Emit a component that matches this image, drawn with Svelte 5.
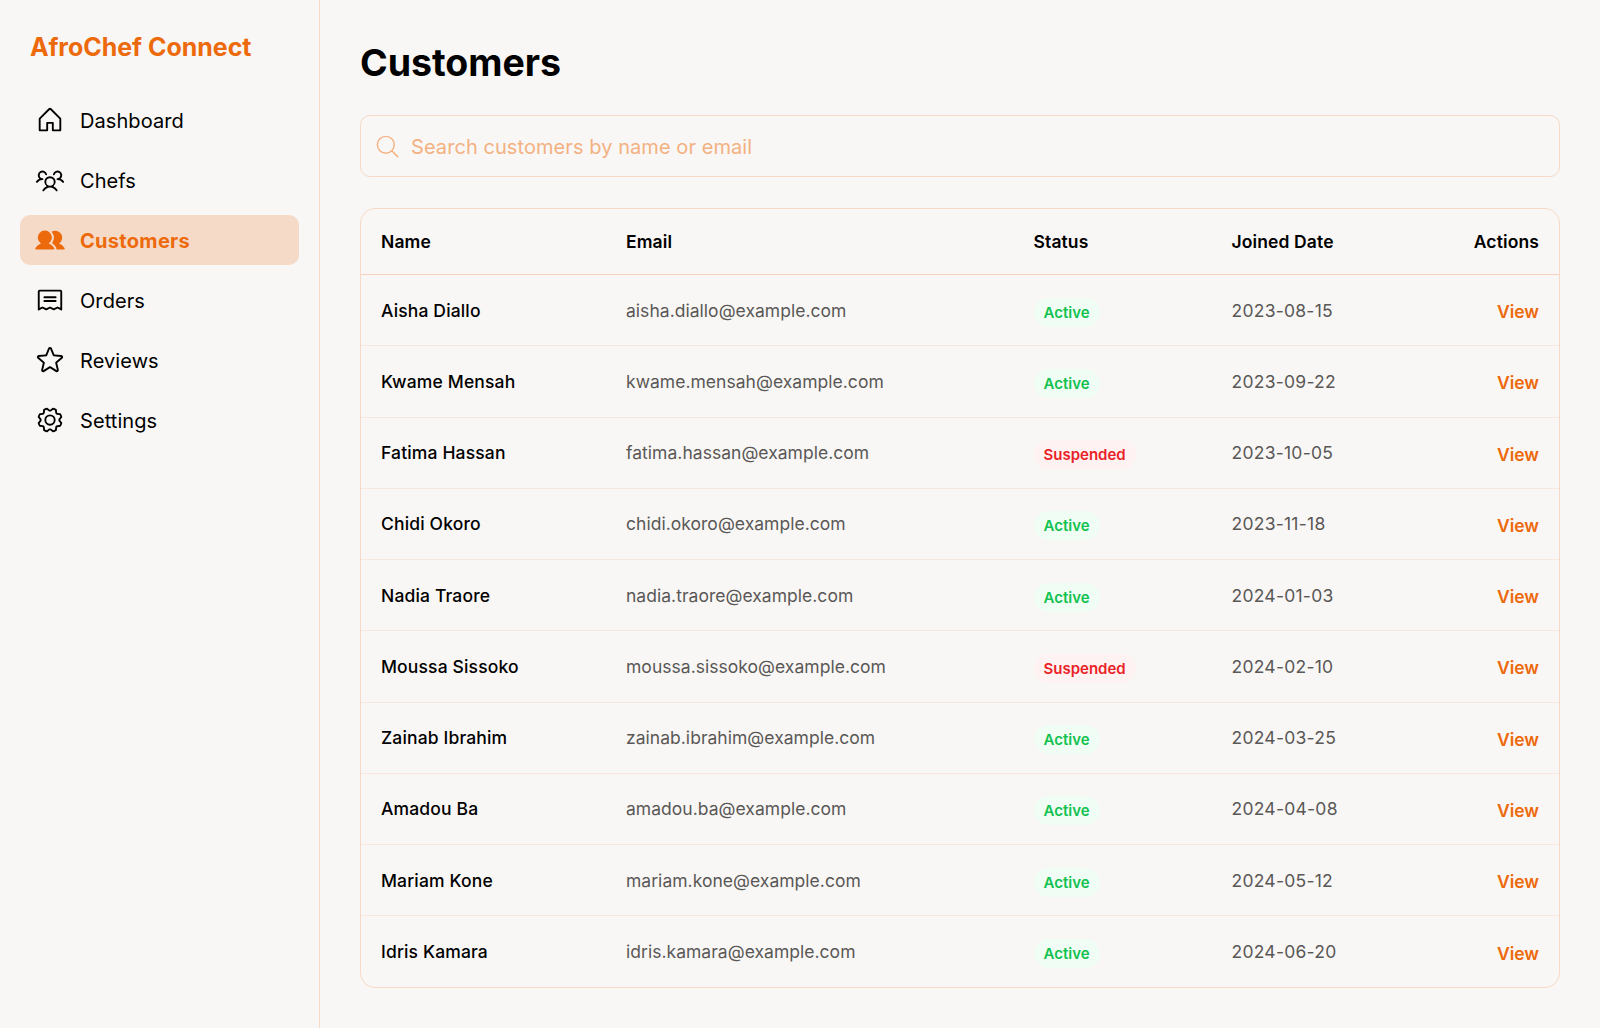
<script>
  const nav = [
    { label: 'Dashboard', d: 'M219.31,108.68l-80-80a16,16,0,0,0-22.63,0l-80,80A15.87,15.87,0,0,0,32,120v96a8,8,0,0,0,8,8h64a8,8,0,0,0,8-8V160h32v56a8,8,0,0,0,8,8h64a8,8,0,0,0,8-8V120A15.87,15.87,0,0,0,219.31,108.68ZM208,208H160V152a8,8,0,0,0-8-8H104a8,8,0,0,0-8,8v56H48V120l80-80,80,80Z' },
    { label: 'Chefs', d: 'M244.8,150.4a8,8,0,0,1-11.2-1.6A51.6,51.6,0,0,0,192,128a8,8,0,0,1-7.37-4.89,8,8,0,0,1,0-6.22A8,8,0,0,1,192,112a24,24,0,1,0-23.24-30,8,8,0,1,1-15.5-4A40,40,0,1,1,219,117.51a67.94,67.94,0,0,1,27.43,21.68A8,8,0,0,1,244.8,150.4ZM190.92,212a8,8,0,1,1-13.84,8,57,57,0,0,0-98.16,0,8,8,0,1,1-13.84-8,72.06,72.06,0,0,1,33.74-29.92,48,48,0,1,1,58.36,0A72.06,72.06,0,0,1,190.92,212ZM128,176a32,32,0,1,0-32-32A32,32,0,0,0,128,176ZM72,120a8,8,0,0,0-8-8A24,24,0,1,1,87.24,82a8,8,0,1,0,15.5-4A40,40,0,1,0,37,117.51,67.94,67.94,0,0,0,9.6,139.19a8,8,0,1,0,12.8,9.61A51.6,51.6,0,0,1,64,128,8,8,0,0,0,72,120Z' },
    { label: 'Customers', active: true, d: 'M164.47,195.63a8,8,0,0,1-6.7,12.37H10.23a8,8,0,0,1-6.7-12.37,95.83,95.83,0,0,1,47.22-37.71,60,60,0,1,1,66.5,0A95.83,95.83,0,0,1,164.47,195.63Zm87.91-.15a95.87,95.87,0,0,0-47.13-37.56A60,60,0,0,0,144.7,54.59a4,4,0,0,0-1.33,6A75.83,75.83,0,0,1,147,150.53a4,4,0,0,0,1.07,5.53,112.32,112.32,0,0,1,29.85,30.83,23.92,23.92,0,0,1,3.65,16.47,4,4,0,0,0,3.95,4.64h60.3a8,8,0,0,0,7.73-5.93A8.22,8.22,0,0,0,252.38,195.48Z' },
    { label: 'Orders', d: 'M72,104a8,8,0,0,1,8-8h96a8,8,0,0,1,0,16H80A8,8,0,0,1,72,104Zm8,40h96a8,8,0,0,0,0-16H80a8,8,0,0,0,0,16ZM232,56V208a8,8,0,0,1-11.58,7.15L192,200.94l-28.42,14.21a8,8,0,0,1-7.16,0L128,200.94,99.58,215.15a8,8,0,0,1-7.16,0L64,200.94,35.58,215.15A8,8,0,0,1,24,208V56A16,16,0,0,1,40,40H216A16,16,0,0,1,232,56Zm-16,0H40V195.06l20.42-10.22a8,8,0,0,1,7.16,0L96,199.06l28.42-14.22a8,8,0,0,1,7.16,0L160,199.06l28.42-14.22a8,8,0,0,1,7.16,0L216,195.06Z' },
    { label: 'Reviews', d: 'M239.18,97.26A16.38,16.38,0,0,0,224.92,86l-59-4.76L143.14,26.15a16.36,16.36,0,0,0-30.27,0L90.11,81.23,31.08,86a16.46,16.46,0,0,0-9.37,28.86l45,38.83L53,211.75a16.38,16.38,0,0,0,24.5,17.82L128,198.49l50.53,31.08A16.4,16.4,0,0,0,203,211.75l-13.76-58.07,45-38.83A16.43,16.43,0,0,0,239.18,97.26Zm-15.34,5.47-48.7,42a8,8,0,0,0-2.56,7.91l14.88,62.8a.37.37,0,0,1-.17.48c-.18.14-.23.11-.38,0l-54.72-33.65a8,8,0,0,0-8.38,0L69.09,215.94c-.15.09-.19.12-.38,0a.37.37,0,0,1-.17-.48l14.88-62.8a8,8,0,0,0-2.56-7.91l-48.7-42c-.12-.1-.23-.19-.13-.5s.18-.27.33-.29l63.92-5.16A8,8,0,0,0,103,91.86l24.62-59.61c.08-.17.11-.25.35-.25s.27.08.35.25L153,91.86a8,8,0,0,0,6.75,4.92l63.92,5.16c.15,0,.24,0,.33.29S224,102.63,223.84,102.73Z' },
    { label: 'Settings', d: 'M128,80a48,48,0,1,0,48,48A48.05,48.05,0,0,0,128,80Zm0,80a32,32,0,1,1,32-32A32,32,0,0,1,128,160Zm88-29.84q.06-2.16,0-4.32l14.92-18.64a8,8,0,0,0,1.48-7.06,107.21,107.21,0,0,0-10.88-26.25,8,8,0,0,0-6-3.93l-23.72-2.64q-1.48-1.56-3-3L186,40.54a8,8,0,0,0-3.94-6,107.71,107.71,0,0,0-26.25-10.87,8,8,0,0,0-7.06,1.49L130.16,40Q128,40,125.84,40L107.2,25.11a8,8,0,0,0-7.06-1.48A107.6,107.6,0,0,0,73.89,34.51a8,8,0,0,0-3.93,6L67.32,64.27q-1.56,1.49-3,3L40.54,70a8,8,0,0,0-6,3.94,107.71,107.71,0,0,0-10.87,26.25,8,8,0,0,0,1.49,7.06L40,125.84Q40,128,40,130.16L25.11,148.8a8,8,0,0,0-1.48,7.06,107.21,107.21,0,0,0,10.88,26.25,8,8,0,0,0,6,3.93l23.72,2.64q1.49,1.56,3,3L70,215.46a8,8,0,0,0,3.94,6,107.71,107.71,0,0,0,26.25,10.87,8,8,0,0,0,7.06-1.49L125.84,216q2.16.06,4.32,0l18.64,14.92a8,8,0,0,0,7.06,1.48,107.21,107.21,0,0,0,26.25-10.88,8,8,0,0,0,3.93-6l2.64-23.72q1.56-1.48,3-3L215.46,186a8,8,0,0,0,6-3.94,107.71,107.71,0,0,0,10.87-26.25,8,8,0,0,0-1.49-7.06Zm-16.1-6.5a73.93,73.93,0,0,1,0,8.68,8,8,0,0,0,1.74,5.48l14.19,17.73a91.57,91.57,0,0,1-6.23,15L187,173.11a8,8,0,0,0-5.1,2.64,74.11,74.11,0,0,1-6.14,6.14,8,8,0,0,0-2.64,5.1l-2.51,22.58a91.32,91.32,0,0,1-15,6.23l-17.74-14.19a8,8,0,0,0-5-1.75h-.48a73.93,73.93,0,0,1-8.68,0,8,8,0,0,0-5.48,1.74L100.45,215.8a91.57,91.57,0,0,1-15-6.23L82.89,187a8,8,0,0,0-2.64-5.1,74.11,74.11,0,0,1-6.14-6.14,8,8,0,0,0-5.1-2.64L46.43,170.6a91.32,91.32,0,0,1-6.23-15l14.19-17.74a8,8,0,0,0,1.74-5.48,73.93,73.93,0,0,1,0-8.68,8,8,0,0,0-1.74-5.48L40.2,100.45a91.57,91.57,0,0,1,6.23-15L69,82.89a8,8,0,0,0,5.1-2.64,74.11,74.11,0,0,1,6.14-6.14A8,8,0,0,0,82.89,69L85.4,46.43a91.32,91.32,0,0,1,15-6.23l17.74,14.19a8,8,0,0,0,5.48,1.74,73.93,73.93,0,0,1,8.68,0,8,8,0,0,0,5.48-1.74L155.55,40.2a91.57,91.57,0,0,1,15,6.23L173.11,69a8,8,0,0,0,2.64,5.1,74.11,74.11,0,0,1,6.14,6.14,8,8,0,0,0,5.1,2.64l22.58,2.51a91.32,91.32,0,0,1,6.23,15l-14.19,17.74A8,8,0,0,0,199.87,123.66Z' }
  ];

  const customers = [
    ['Aisha Diallo', 'aisha.diallo@example.com', 'Active', '2023-08-15'],
    ['Kwame Mensah', 'kwame.mensah@example.com', 'Active', '2023-09-22'],
    ['Fatima Hassan', 'fatima.hassan@example.com', 'Suspended', '2023-10-05'],
    ['Chidi Okoro', 'chidi.okoro@example.com', 'Active', '2023-11-18'],
    ['Nadia Traore', 'nadia.traore@example.com', 'Active', '2024-01-03'],
    ['Moussa Sissoko', 'moussa.sissoko@example.com', 'Suspended', '2024-02-10'],
    ['Zainab Ibrahim', 'zainab.ibrahim@example.com', 'Active', '2024-03-25'],
    ['Amadou Ba', 'amadou.ba@example.com', 'Active', '2024-04-08'],
    ['Mariam Kone', 'mariam.kone@example.com', 'Active', '2024-05-12'],
    ['Idris Kamara', 'idris.kamara@example.com', 'Active', '2024-06-20']
  ];
</script>

<div class="app">
  <aside>
    <div class="brand">AfroChef Connect</div>
    <nav>
      {#each nav as item}
        <a class="link" class:active={item.active} href="#{item.label}">
          <svg viewBox="0 0 256 256" aria-hidden="true"><path d={item.d} /></svg>
          <span>{item.label}</span>
        </a>
      {/each}
    </nav>
  </aside>

  <main>
    <h1>Customers</h1>
    <label class="search">
      <svg viewBox="0 0 256 256" aria-hidden="true"><circle cx="112" cy="112" r="80" /><path d="M168.6 168.6 224 224" /></svg>
      <input placeholder="Search customers by name or email" />
    </label>

    <section class="table">
      <div class="row head">
        <span>Name</span><span>Email</span><span>Status</span><span>Joined Date</span><span class="right">Actions</span>
      </div>
      {#each customers as [name, email, status, joined]}
        <div class="row">
          <span class="name">{name}</span>
          <span class="muted">{email}</span>
          <span class="status"><span class="badge" class:suspended={status === 'Suspended'}>{status}</span></span>
          <span class="muted date">{joined}</span>
          <a class="view" href="#view">View</a>
        </div>
      {/each}
    </section>
  </main>
</div>

<style>
  :global(body) {
    background: #f9f7f5;
    color: #000;
    font-family: Inter, sans-serif;
    overflow: hidden;
  }
  * { box-sizing: border-box; }
  a { color: inherit; text-decoration: none; }
  .app { display: flex; height: 1028px; }
  aside {
    width: 320px;
    border-right: 1px solid #f6d9c6;
    padding: 30px 20px;
  }
  .brand {
    padding: 0 10px;
    font-size: 25px;
    line-height: 35px;
    font-weight: 700;
    letter-spacing: -0.02px;
    color: #ec6a0c;
  }
  nav { display: flex; flex-direction: column; gap: 10px; margin-top: 30px; }
  .link {
    display: flex;
    align-items: center;
    gap: 15px;
    height: 50px;
    padding: 0 15px;
    border-radius: 10px;
    font-size: 20px;
    font-weight: 375;
    letter-spacing: 0.08px;
  }
  .link span { padding-top: 1px; }
  .link svg { width: 30px; height: 30px; fill: currentColor; }
  .link.active { background: #f6dac8; color: #ec6a0c; font-weight: 700; letter-spacing: 0.3px; }

  main { flex: 1; padding: 40px 40px 0; }
  h1 { margin: 0; font-size: 37.5px; line-height: 45px; font-weight: 700; letter-spacing: -0.04px; }
  .search {
    display: flex;
    align-items: center;
    gap: 10px;
    height: 62px;
    margin-top: 30px;
    padding: 0 15px 0 13px;
    border: 1px solid #f6d9c6;
    border-radius: 10px;
  }
  .search svg { width: 27px; height: 27px; fill: none; stroke: #f3b182; stroke-width: 14; stroke-linecap: round; }
  input {
    flex: 1;
    border: 0;
    padding: 2px 0 0;
    background: none;
    outline: 0;
    font: 375 20px Inter, sans-serif;
    letter-spacing: 0.07px;
  }
  input::placeholder { color: #f3b182; opacity: 1; }

  .table {
    margin-top: 31px;
    border: 1px solid #f6d9c6;
    border-radius: 15px;
    font-size: 17.5px;
  }
  .row {
    display: grid;
    grid-template-columns: 245px 407.5px 198px 1fr 100px;
    align-items: center;
    height: 71.25px;
    padding: 0 20px;
    border-bottom: 1px solid #f7e7dc;
  }
  .row:last-child { height: 70.75px; border-bottom: 0; }
  .head { height: 66px; font-weight: 620; letter-spacing: 0.12px; border-bottom-color: #f6d3bd; }
  .right, .view { text-align: right; }
  .name { font-weight: 480; letter-spacing: 0.15px; }
  .muted { color: #595857; font-weight: 375; letter-spacing: 0.03px; }
  .date { letter-spacing: 0.25px; }
  .status { display: flex; padding-top: 4px; }
  .badge {
    padding: 4px 10px;
    border-radius: 15px;
    background: #f0fdf4;
    color: #12c150;
    font-size: 15px;
    line-height: 21px;
    font-weight: 640;
  }
  .badge.suspended { background: #fef2f2; color: #ea1f27; }
  .view { padding-top: 3px; color: #ec6a0c; font-weight: 640; }
</style>
